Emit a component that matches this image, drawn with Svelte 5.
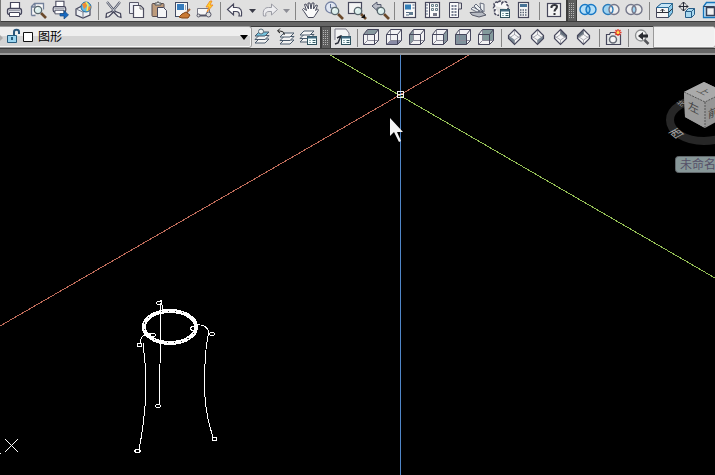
<script>
  const ink = '#46475c';
  const lens = (x, y) =>
    `<path d="M${x + 3} ${y + 3}l5 5" stroke="#6b4a2c" stroke-width="2.6"/><circle cx="${x}" cy="${y}" r="3.7" fill="#dcefed" stroke="#59676d" stroke-width="1.3"/><path d="M${x - 2} ${y - 1}l2-1" stroke="#fff"/>`;
  const list = (x, y) =>
    `<rect x="${x}" y="${y}" width="9" height="8" fill="#f4ffff" stroke="#2e505c"/><path d="M${x} ${y + 1}h9" stroke="#446c82" stroke-width="2"/><path d="M${x + 2} ${y + 4}h1m2 0h3M${x + 2} ${y + 6}h1m2 0h3" stroke="#335a66"/>`;
  const box = (face) =>
    `<path d="M2.5 7.5l4-5h11v11l-4 4h-11z" fill="#f2f2f4"/>${face}<path d="M6.5 3v10.500h11M6.500 13.500l-4 4" fill="none" stroke="#8b8b99"/><path d="M2.500 7.500l4-5h11v11l-4 4h-11zM2.500 7.500h11v10M13.500 7.500l4-5" fill="none" stroke="${ink}"/>`;
  const gem = (face) =>
    `<path d="M9.500 2.500l6.500 6v3l-6.500 6.500-6.500-6.500v-3z" fill="#f5f5f6"/><path d="M9.500 3v5M3.500 9l6 4 6-4M9.500 13v5M3.500 11.500l6-4 6 4" fill="none" stroke="#9a9aa5" stroke-width=".8"/>${face}<path d="M9.500 2.500l6 6v3l-6 6-6-6v-3z" fill="none" stroke="${ink}" stroke-width="1.200"/>`;
  const sheets = (x, y, top) =>
    `<g stroke="#4a5a6c" fill="#f3f3f3"><path d="M${x} ${y + 8}l4-4h10l-4 4z"/><path d="M${x} ${y + 4.5}l4-4h10l-4 4z"/><path d="M${x} ${y + 1}l4-4h10l-4 4z" fill="${top}"/></g>`;
  const printer = `<path d="M6.500 8.500v-6h9v6" fill="#fff" stroke="${ink}" stroke-width="1.200"/><rect x="3.500" y="8.500" width="14" height="6" rx="2" fill="#dfe1e7" stroke="${ink}" stroke-width="1.300"/><path d="M5.500 12.500h10v4h-10z" fill="#fff" stroke="${ink}"/><path d="M5 10.500h11" stroke="#a0a3ae"/>`;
  const circles = (l, r, mid, a, b) =>
    `<circle cx="7" cy="9.500" r="5" fill="${l}"/><circle cx="13" cy="9.500" r="5" fill="${r}"/><path d="M10 5.500a5 5 0 0 1 0 8a5 5 0 0 1 0-8z" fill="${mid}"/><g fill="none" stroke-width="1.400"><circle cx="7" cy="9.500" r="5" stroke="${a}"/><circle cx="13" cy="9.500" r="5" stroke="${b}"/></g>`;

  const art = {
    print: printer,
    preview: `<path d="M4.500 15.500v-9l3-3h9v6M4.500 15.500h4M4.500 7h3.500v-3" fill="#fafafa" stroke="#73819a" stroke-width="1.300"/>${lens(11, 10)}`,
    plot: `<g transform="translate(0 -1) scale(.9)">${printer}</g><path d="M10 13.500h4v-3l4.500 4.500-4.500 4v-3h-4z" fill="#1769c0" stroke="#174b82" stroke-width=".7"/>`,
    dwf: `<path d="M3 9l6-3 8 3v6l-7 3-7-3z" fill="#eef0f3" stroke="${ink}" stroke-width="1.200"/><path d="M3 9l7 3v6M10 12l7-3" fill="none" stroke="#777c8b"/><circle cx="13" cy="7" r="5" fill="#67bce2" stroke="#246a9d"/><path d="M9 4l4-2 1 4-3 3zM14 7l4-1-1 4-3 1z" fill="#f08a35"/><path d="M13 2l2 3-1 6" stroke="#f5ed59" stroke-width="1.500" fill="none"/>`,
    cut: `<path d="M4 2l9 11M17 2l-9 11" stroke="#505466" stroke-width="2.200"/><path d="M4 2l8 10M17 2l-8 10" stroke="#eef1f4" stroke-width=".8"/><path d="M8.500 11.500l-5 2-.500 4 3-1 4-4zM12.500 11.500l5 2 .500 4-3-1-4-4z" fill="#eee" stroke="${ink}" stroke-width="1.200"/>`,
    copy: `<path d="M3.500 2.500h9v11h-9z" fill="#eceef4" stroke="#59596b"/><path d="M7.500 5.500h7l3 3v9h-10z" fill="#fafafa" stroke="#4d4d60" stroke-width="1.200"/><path d="M14 6v3h3" fill="none" stroke="#777"/>`,
    paste: `<rect x="3" y="3.500" width="12" height="13" rx="1" fill="#bd9b7c" stroke="#5a4e50"/><path d="M6 5V3h2l1-1.500 1 1.500h2v2z" fill="#ddd" stroke="#555"/><path d="M8.500 7.500h6l3 3v7h-9z" fill="#f4f4f6" stroke="${ink}"/>`,
    match: `<rect x="3.500" y="2.500" width="12" height="14" fill="#f7f7f7" stroke="#424b64"/><path d="M5 4h7v6H5z" fill="#367cbd"/><path d="M13.500 5v5" stroke="#9da6b0"/><path d="M10 14l4-2 4 3-2 3h-6l-3-1z" fill="#c97a35" stroke="#824618"/><path d="M15 12l3-3" stroke="#a7673b" stroke-width="2"/>`,
    block: `<path d="M2.500 8.500h12v7h-12z" fill="#f7f7f7" stroke="#777886"/><path d="M3 15.500h8" stroke="#555667" stroke-width="2"/><circle cx="3.500" cy="15.500" r="1.500" fill="#ddd" stroke="#555667"/><circle cx="13.500" cy="14.500" r="2.500" fill="#ddd" stroke="#555667"/><path d="M15 1l-4 6h3l-2 5 6-7h-3l2-4z" fill="#ffd12a" stroke="#ed8220" stroke-width=".8"/>`,
    undo: `<path d="M2.500 9.500l6-5.500v3.500h3c4 0 6 3 5 8.500h-2.500c1-3-.500-4.500-3-4.500h-2.500v3.500z" fill="#fafafa" stroke="${ink}" stroke-width="1.200"/>`,
    redo: `<path d="M18.500 9.500l-6-5.500v3.500h-3c-4 0-6 3-5 8.500h2.500c-1-3 .500-4.500 3-4.500h2.500v3.500z" fill="#ededf0" stroke="#9b9ca5"/>`,
    pan: `<path d="M8 17.500l-4-6-1.500-2 1-1 3 2-2-6 1.500-.500 2.500 5-.500-6h2l1 6 1-6h2l-.500 6 2.500-4 1.500.500-2 5 2-1.500 1 1-3.500 5.500-1.500 2z" fill="#fafafa" stroke="#46495b" stroke-linejoin="round"/>`,
    zoom: `<circle cx="8" cy="7.500" r="5.500" fill="#e1e7f3" stroke="#7582a3" stroke-width="1.300"/><path d="M7.500 4v4h4" fill="none" stroke="#637394"/>${lens(12, 11)}`,
    zoomwin: `<rect x="2.500" y="2.500" width="13" height="11" fill="#f5f5f5" stroke="${ink}" stroke-width="1.200"/>${lens(12, 11)}<path d="M19 14v4h-4z" fill="#111"/>`,
    zoomprev: `<path d="M3 6l5-4v2.500h4v3.500h-4v2.500z" fill="#b9bcc6" stroke="#555b6e"/>${lens(12, 11)}`,
    props: `<rect x="4.500" y="2.500" width="12" height="15" fill="#fafafa" stroke="${ink}" stroke-width="1.200"/><path d="M6 4.500h6v5H6z" fill="#347fb8"/><path d="M13.500 5h2M13.500 8h2M7 12.500h3M7 15h3" stroke="#536a82"/><path d="M10 12h4v3h-4z" fill="#627c91"/>`,
    center: `<rect x="3.500" y="2.500" width="14" height="15" fill="#fafafa" stroke="${ink}" stroke-width="1.200"/><path d="M7.500 3v14" stroke="${ink}"/><path d="M4 5h2M4 8h2M4 11h2M4 14h2" stroke="#66748d"/><g fill="#eef2f3" stroke="#667d88"><path d="M9.500 4.500h2v2h-2zM13.500 4.500h2v2h-2zM9.500 8.500h2v2h-2zM13.500 8.500h2v2h-2z"/></g><path d="M11 13h4v3h-4z" fill="#777887"/>`,
    palette: `<path d="M4.500 2.500h9v15h-9z" fill="#fafafa" stroke="${ink}"/><path d="M13.500 3h3v6h-3" fill="#ddd" stroke="${ink}"/><path d="M7.500 5v11M10.500 5v11" stroke="#777e91" stroke-width="2" stroke-dasharray="2 1"/>`,
    sheet: `<path d="M2 12.500l12-.500 4 3-7 2-7-2z" fill="#b7bbc3" stroke="#555867"/><path d="M3 9l6 3 3-1-7-4zM6 6l6 6 3-1-7-7zM12 3l1 8 3 1v-8z" fill="#edf0f2" stroke="#6a7080"/>`,
    markup: `<path d="M4 6c-3-3 2-5 3-3 1-3 4-2 4 0 2-3 6-1 5 2 3 2 1 4 0 4M4 6c-3 2-1 4 0 4-2 3 1 6 4 5" fill="#f8f8f8" stroke="${ink}" stroke-width="1.500" stroke-dasharray="3 1"/>${list(9.5, 9.5)}`,
    calc: `<rect x="4.500" y="2.500" width="10" height="15" fill="#f5f5f5" stroke="${ink}" stroke-width="1.200"/><path d="M6 5.500h7" stroke="#477397" stroke-width="3"/><path d="M6 10h7M6 12.500h7M6 15h7" stroke="#596375" stroke-width="1.500" stroke-dasharray="1.500 1"/>`,
    help: `<rect x="3.500" y="3.500" width="13" height="13" fill="#f4f4f4" stroke="${ink}" stroke-width="1.200"/><path d="M7.500 8V6.500c1-2 5.500-2 5.500 0 0 2.500-2.500 2.500-2.500 5" fill="none" stroke="#303239" stroke-width="2"/><path d="M9.500 13h2v2h-2z" fill="#303239"/>`,
    union: circles('#b6dff7', '#b6dff7', '#8dc9ed', '#1677c5', '#1677c5'),
    subtract: circles('#9ed3f2', '#eee', '#eee', '#2979b8', '#74778a'),
    intersect: circles('#eee', '#eee', '#9ed3f2', '#74778a', '#74778a'),
    presspull: `<path d="M2.500 7.500l5-4h11v9l-4 5h-12z" fill="#f5f5f5" stroke="${ink}"/><path d="M2.500 7.500l5-4h11l-4 4z" fill="#c5e5f7" stroke="#286c9d"/><path d="M14.500 7.500l4-4v9l-4 5z" fill="#87c9ee" stroke="#356785"/><path d="M3 12.500h11.500l4-4" fill="none" stroke="#30323c"/><path d="M8.500 13V9M6.500 11l2-2 2 2" fill="none" stroke="#30323c"/>`,
    move: `<path d="M6.500 2v9M2 6.500h9M4.500 4l2-2 2 2M4.500 9l2 2 2-2M4 4.500l-2 2 2 2M9 4.500l2 2-2 2" fill="none" stroke="#252935"/><path d="M8.500 11.500l3-3h6v6l-3 3h-6zM8.500 11.500h6v6M14.500 11.500l3-3" fill="#a9d8ef" stroke="#285d87"/>`,
    shell: `<path d="M3.500 6.500l3-4h12v12l-4 3h-11z" fill="#c3e3f7" stroke="#1675bb" stroke-width="1.300"/><path d="M6.500 7.500h8v8h-8z" fill="#f1f1f1" stroke="#374158" stroke-width="1.500"/><path d="M3.500 6.500h11l4-4" fill="none" stroke="#374158"/>`,
    layers: `${sheets(3, 8, '#74c4df')}<circle cx="9" cy="4.500" r="2.500" fill="#eef3f2" stroke="#566976"/>`,
    layerprev: `${sheets(5, 9, '#f5f5f5')}<path d="M9 8c1-3-2-4-6-4M5 1.500L2.500 4 5 6" fill="none" stroke="#171717"/>`,
    layerstate: `${sheets(2, 7, '#f5f5f5')}${list(9.5, 9.5)}`,
    views: `<path d="M3 13v-11h11l3 4v4" fill="#f4f4f4" stroke="#7a7a88"/><path d="M3 17l3-1 3-7M5 11l4-2 4 3" fill="none" stroke="#292c37" stroke-width="1.500"/>${list(9.5, 9.5)}`,
    top: box('<path d="M2.500 7.500l4-5h11l-4 5z" fill="#87999f"/>'),
    bottom: box('<path d="M2.500 17.500l4-4h11l-4 4z" fill="#898ba5"/>'),
    left: box('<path d="M2.500 7.500l4-5v11l-4 4z" fill="#87999f"/>'),
    right: box('<path d="M13.500 7.500l4-5v11l-4 4z" fill="#87999f"/>'),
    front: box('<path d="M2.500 7.500h11v10h-11z" fill="#7f929c"/>'),
    back: box('<path d="M6.500 2.500h11v11h-11z" fill="#839a9c"/>'),
    sw: gem('<path d="M3.500 8.500l6 4.500v4.500l-6-6z" fill="#7a8894"/>'),
    se: gem('<path d="M15.500 8.500l-6 4.500v4.500l6-6z" fill="#7a8894"/>'),
    ne: gem('<path d="M9.500 2.500l6 6v2.500l-6-4z" fill="#65717d"/>'),
    nw: gem('<path d="M9.500 2.500l-6 6v2.500l6-4z" fill="#65717d"/>'),
    camera: `<path d="M3.500 7.500h3l1-2h5l1 2h4v10h-14z" fill="#e4e7e7" stroke="${ink}" stroke-width="1.200"/><circle cx="10" cy="12.500" r="3.500" fill="#f6f6f6" stroke="#656b77" stroke-width="1.500"/><path d="M15 2v7M11.500 5.500h7M12.500 3l5 5M17.500 3l-5 5" stroke="#e5372a" stroke-width="1.300"/><circle cx="15" cy="5.500" r="1.500" fill="#ffe451"/>`,
    zoomback: `<circle cx="9" cy="8.500" r="5.500" fill="#f3f3f3" stroke="#8a8d8f" stroke-width="1.300"/><path d="M6 9l5-4v2.500h5v3h-5v2.500z" fill="#292b30"/><path d="M12.500 13l4 4" stroke="#55565a" stroke-width="2.500"/>`
  };

  const main = ['print:Print', 'preview:Plot preview', 'plot:Publish', 'dwf:3D DWF', '|', 'cut:Cut', 'copy:Copy', 'paste:Paste', 'match:Match properties', 'block:Block editor', '|', 'undo:Undo', 'v:Undo list', 'redo:Redo', 'v:Redo list', '|', 'pan:Pan', 'zoom:Zoom realtime', 'zoomwin:Zoom window', 'zoomprev:Zoom previous', '|', 'props:Properties', 'center:DesignCenter', 'palette:Tool palettes', 'sheet:Sheet set manager', 'markup:Markup set manager', 'calc:Calculator', '|', 'help:Help', '#', 'union:Union', 'subtract:Subtract', 'intersect:Intersect', '|', 'presspull:Press pull', 'move:Move faces', 'shell:Shell'];
  const second = ['layers:Make object layer current', 'layerprev:Layer previous', 'layerstate:Layer states', '#', 'views:Named views', '|', 'top:Top', 'bottom:Bottom', 'left:Left', 'right:Right', 'front:Front', 'back:Back', '|', 'sw:SW isometric', 'se:SE isometric', 'ne:NE isometric', 'nw:NW isometric', '|', 'camera:Create camera', '|', 'zoomback:Previous view'];
</script>

{#snippet tools(items)}
  {#each items as item}
    {@const [id, label] = item.split(':')}
    {#if id === '|'}
      <span class="sep"></span>
    {:else if id === '#'}
      <span class="grip"></span>
    {:else if id === 'v'}
      <button class="drop" aria-label={label}><svg width="7" height="4"><path d="M0 0h7L3.500 4z" fill="currentColor" /></svg></button>
    {:else}
      <button class="tool" aria-label={label}><svg width="21" height="21" viewBox="0 0 21 21">{@html art[id]}</svg></button>
    {/if}
  {/each}
{/snippet}

<div class="app">
  <div class="bar first" role="toolbar" aria-label="Standard">
    {@render tools(main)}
  </div>
  <div class="bar second" role="toolbar" aria-label="Layers and views">
    <div class="layer">
      <select aria-label="Layer"><option>图形</option></select>
      <svg class="status" width="36" height="21" aria-hidden="true">
        <path d="M0 8l3 3-3 3z" fill="#aaa" />
        <path d="M14 9V5c0-3 5-3 5 0v2" fill="none" stroke="#28567b" stroke-width="2" />
        <path d="M7.500 8.500h9v7h-9z" fill="#9bd5f0" stroke="#265b7d" />
        <path d="M12 10v3" stroke="#265b7d" stroke-width="2" />
        <path d="M23.500 5.500h9v9h-9z" fill="#fff" stroke="#111" />
      </svg>
      <svg class="arrow" width="8" height="5" aria-hidden="true"><path d="M0 0h8L4 5z" /></svg>
    </div>
    {@render tools(second)}
    <select class="view" aria-label="View"><option></option></select>
  </div>

  <svg class="canvas" viewBox="0 55 715 420" preserveAspectRatio="xMinYMin slice" role="img" aria-label="Drawing">
    <g shape-rendering="crispEdges">
      <path d="M0 326L469 55" stroke="#c06c5a" />
      <path d="M330 55L715 278" stroke="#94bf55" />
      <path d="M400.500 55V475" stroke="#5086c8" />
      <path d="M397.500 91.500h6v6h-6zM398 94.500h5" fill="none" stroke="#eee" />
      <path d="M5 439l13 13M18 439L5 452M0 453.500h1" stroke="#fff" />
    </g>
    <path d="M390 118v18l4-4 5 10 2-1-4-9h6z" fill="#f4f4f4" />

    <g fill="none" stroke="#fff" shape-rendering="crispEdges">
      <ellipse cx="170" cy="327" rx="26" ry="16" stroke-width="4" />
      <ellipse cx="170" cy="327" rx="26" ry="16" stroke="#333" stroke-dasharray="1 6" />
      <path d="M160.500 303V343L159 405M159 302l2-2 2 10" />
      <path d="M140 343c1-8 5-9 11-9M143 343c2 15 3 29 3 45-1 26-3 43-7 61" />
      <path d="M197 325c8-1 10 3 12 7-4 15-5 34-4 65 1 17 4 28 8 40" />
      <ellipse cx="139.500" cy="345" rx="2.500" ry="1.700" />
      <ellipse cx="152" cy="335" rx="3.500" ry="1.700" />
      <ellipse cx="193" cy="328.500" rx="3" ry="1.700" />
      <ellipse cx="212" cy="334" rx="2.500" ry="1.700" />
      <ellipse cx="159" cy="303" rx="2.500" ry="1.500" />
      <ellipse cx="158" cy="406" rx="2.500" ry="1.700" />
      <ellipse cx="137.500" cy="451" rx="2.700" ry="1.700" />
      <ellipse cx="214.500" cy="439" rx="2.500" ry="1.700" />
    </g>

    <ellipse cx="704" cy="120" rx="34" ry="21" fill="none" stroke="#272727" stroke-width="8" />
    <path d="M684 92l20-10 21 10v25l-20 11-20-11z" fill="#969696" />
    <path d="M684 92l20-10 21 10-20 10z" fill="#aaa" />
    <path d="M684 92l21 10v26l-20-11z" fill="#9c9c9c" />
    <path d="M684 92l21 10 20-10M705 102v26" fill="none" stroke="#555" stroke-dasharray="2 1" />
    <g class="cubetext">
      <text transform="matrix(1 .5 0 1 688 109)" font-size="11">左</text>
      <text transform="matrix(1 -.5 0 1 708 119)" font-size="11">前</text>
      <text transform="matrix(.8 .4 -.8 .4 696 91)" font-size="11">上</text>
      <text class="compass" transform="matrix(.9 -.5 .7 .6 674 139)" font-size="12">西</text>
      <text class="compass" transform="matrix(.7 .4 -.5 .5 676 103)" font-size="9">北</text>
    </g>
    <rect x="675.500" y="156.500" width="48" height="16" rx="3" fill="#879798" stroke="#62686c" />
    <text class="ucs" x="680" y="169">未命名</text>
  </svg>
</div>

<style>
  :global(body) {
    margin: 0;
    background: #000;
  }
  .app {
    display: flex;
    flex-direction: column;
    height: 100vh;
    overflow: hidden;
    background: #000;
    font-family: "Liberation Sans", "Noto Sans CJK SC", sans-serif;
  }
  .bar {
    display: flex;
    flex: none;
    height: 21px;
    background: #e0e0e0;
  }
  .first {
    --sep: 7px;
    padding-left: 2px;
    border-left: 1px solid #777;
    border-bottom: 1px solid #3c3c3c;
  }
  .second {
    --sep: 6px;
    border-top: 1px solid #3c3c3c;
    border-bottom: 1px solid #3c3c3c;
    box-shadow: 0 -4px #666, 0 4px #666, 0 6px #999;
    margin: 4px 0 6px;
  }
  button {
    display: flex;
    flex: none;
    align-items: center;
    justify-content: center;
    height: 21px;
    padding: 0;
    border: 0;
    background: none;
    color: #3b3c48;
  }
  .tool {
    width: 23px;
  }
  .drop {
    width: 11px;
  }
  .drop[aria-label='Redo list'] {
    color: #8d8e96;
  }
  .sep {
    flex: none;
    width: var(--sep);
    background: linear-gradient(#858585, #858585) center / 1px 18px no-repeat;
  }
  .grip {
    flex: none;
    box-sizing: border-box;
    width: 11px;
    padding: 3px 1px;
    border: solid #3c3c3c;
    border-width: 0 1px 0 2px;
    background-color: #5d5d5d;
    background-image: conic-gradient(#b0b0b0 25%, transparent 0);
    background-size: 2px 2px;
    background-clip: content-box;
    background-origin: content-box;
    box-shadow: inset 0 0 0 11px #5d5d5d;
    background: conic-gradient(#5d5d5d 75%, #b5b5b5 0) 0 0 / 2px 2px content-box, #5d5d5d;
    box-shadow: none;
  }
  .layer {
    position: relative;
    flex: none;
    width: 251px;
  }
  select {
    appearance: none;
    box-sizing: border-box;
    display: block;
    width: 100%;
    height: 20px;
    margin: 0;
    padding: 0 16px 0 38px;
    border: 1px solid #f5f5f5;
    border-width: 0 1px 1px 0;
    border-radius: 0 2px 2px 0;
    outline: 1px solid #999;
    background: linear-gradient(#eee 0 45%, #d4d4d4 45% 100%);
    color: #000;
    font: 12px/20px "Liberation Sans", "Noto Sans CJK SC", sans-serif;
  }
  .status {
    position: absolute;
    top: 0;
    left: 0;
    pointer-events: none;
  }
  .arrow {
    position: absolute;
    top: 8px;
    right: 3px;
    pointer-events: none;
  }
  .view {
    flex: 1;
    min-width: 40px;
    padding: 0;
    background: #f0f0f0;
  }
  .canvas {
    display: block;
    flex: 1;
    width: 100%;
    min-height: 0;
  }
  .cubetext {
    fill: #444;
    font-family: "Noto Sans CJK SC", sans-serif;
  }
  .compass {
    fill: #aaa;
  }
  .ucs {
    fill: #555068;
    font: 12px "Noto Sans CJK SC", sans-serif;
  }
</style>
